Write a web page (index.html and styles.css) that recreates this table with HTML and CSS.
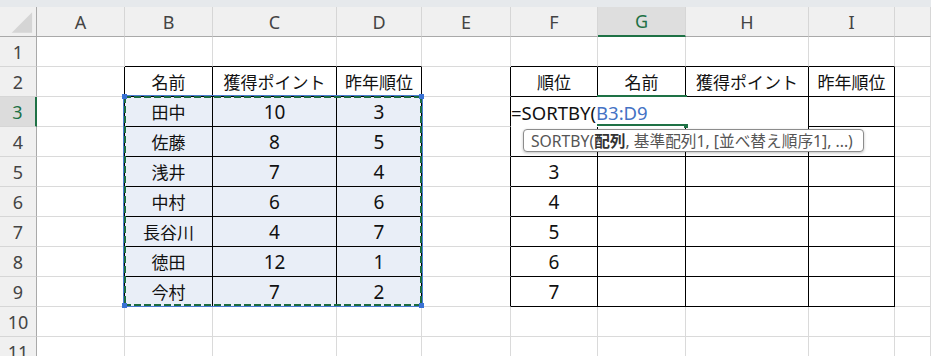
FILE: index.html
```html
<!DOCTYPE html>
<html lang="ja">
<head>
<meta charset="utf-8">
<title>Sheet</title>
<link rel="stylesheet" href="styles.css">
</head>
<body>
<div class="app">
  <div class="strip"></div>
  <div class="sheet">
    <!-- header row -->
    <div class="c corner"><svg width="37" height="30" viewBox="0 0 37 30"><polygon points="12,26 33,26 33,5" fill="#d5d5d5"/></svg></div>
    <div class="c ch">A</div><div class="c ch">B</div><div class="c ch">C</div><div class="c ch">D</div><div class="c ch">E</div><div class="c ch">F</div><div class="c ch ch-act">G</div><div class="c ch">H</div><div class="c ch">I</div><div class="c ch"></div>
    <!-- row 1 -->
    <div class="c rh">1</div><div class="c"></div><div class="c bb"></div><div class="c bb"></div><div class="c bb"></div><div class="c"></div><div class="c bb"></div><div class="c bb"></div><div class="c bb"></div><div class="c bb"></div><div class="c"></div>
    <!-- row 2 -->
    <div class="c rh">2</div><div class="c br"></div><div class="c t">名前</div><div class="c t">獲得ポイント</div><div class="c t">昨年順位</div><div class="c br"></div><div class="c t">順位</div><div class="c t">名前</div><div class="c t">獲得ポイント</div><div class="c t">昨年順位</div><div class="c"></div>
    <!-- row 3 -->
    <div class="c rh rh-act">3</div><div class="c br"></div><div class="c t s">田中</div><div class="c t s n">10</div><div class="c t s n">3</div><div class="c br"></div><div class="c t"></div><div class="c t"></div><div class="c t"></div><div class="c t"></div><div class="c"></div>
    <!-- row 4 -->
    <div class="c rh">4</div><div class="c br"></div><div class="c t s">佐藤</div><div class="c t s n">8</div><div class="c t s n">5</div><div class="c br"></div><div class="c t"></div><div class="c t"></div><div class="c t"></div><div class="c t"></div><div class="c"></div>
    <!-- row 5 -->
    <div class="c rh">5</div><div class="c br"></div><div class="c t s">浅井</div><div class="c t s n">7</div><div class="c t s n">4</div><div class="c br"></div><div class="c t n">3</div><div class="c t"></div><div class="c t"></div><div class="c t"></div><div class="c"></div>
    <!-- row 6 -->
    <div class="c rh">6</div><div class="c br"></div><div class="c t s">中村</div><div class="c t s n">6</div><div class="c t s n">6</div><div class="c br"></div><div class="c t n">4</div><div class="c t"></div><div class="c t"></div><div class="c t"></div><div class="c"></div>
    <!-- row 7 -->
    <div class="c rh">7</div><div class="c br"></div><div class="c t s">長谷川</div><div class="c t s n">4</div><div class="c t s n">7</div><div class="c br"></div><div class="c t n">5</div><div class="c t"></div><div class="c t"></div><div class="c t"></div><div class="c"></div>
    <!-- row 8 -->
    <div class="c rh">8</div><div class="c br"></div><div class="c t s">徳田</div><div class="c t s n">12</div><div class="c t s n">1</div><div class="c br"></div><div class="c t n">6</div><div class="c t"></div><div class="c t"></div><div class="c t"></div><div class="c"></div>
    <!-- row 9 -->
    <div class="c rh">9</div><div class="c br"></div><div class="c t s">今村</div><div class="c t s n">7</div><div class="c t s n">2</div><div class="c br"></div><div class="c t n">7</div><div class="c t"></div><div class="c t"></div><div class="c t"></div><div class="c"></div>
    <!-- row 10 -->
    <div class="c rh">10</div><div class="c"></div><div class="c"></div><div class="c"></div><div class="c"></div><div class="c"></div><div class="c"></div><div class="c"></div><div class="c"></div><div class="c"></div><div class="c"></div>
    <!-- row 11 -->
    <div class="c rh rh-last">11</div><div class="c"></div><div class="c"></div><div class="c"></div><div class="c"></div><div class="c"></div><div class="c"></div><div class="c"></div><div class="c"></div><div class="c"></div><div class="c"></div>

    <!-- overlays -->
    <div class="sel"></div>
    <div class="handle h-tl"></div>
    <div class="handle h-tr"></div>
    <div class="handle h-bl"></div>
    <div class="handle h-br"></div>
    <div class="edit">=SORTBY(<span class="ref">B3:D9</span></div>
    <div class="act act-top"></div>
    <div class="act act-bot"></div>
    <div class="act-sq"></div>
    <div class="tip">SORTBY(<b>配列</b>, 基準配列1, [並べ替え順序1], ...)</div>
  </div>
</div>
</body>
</html>
```

FILE: styles.css
```css
* { box-sizing: border-box; }
html, body { margin: 0; padding: 0; background: #fff; }
body {
  width: 931px;
  height: 356px;
  overflow: hidden;
  font-family: "Noto Sans CJK JP", "Noto Sans", sans-serif;
}
.app { width: 931px; }
.strip { height: 7px; background: #e6e9ec; }
.sheet {
  position: relative;
  display: grid;
  grid-template-columns: 37px 88px 88px 124px 85px 89px 87px 88px 123px 86px 1fr;
  grid-auto-rows: 30px;
}
.c {
  border-right: 1px solid #dadada;
  border-bottom: 1px solid #dadada;
  display: flex;
  align-items: center;
  justify-content: center;
  font-size: 17px;
  color: #111;
  white-space: nowrap;
  overflow: hidden;
}
.n {
  font-family: "Noto Sans", sans-serif;
  font-size: 19px;
}
.ch {
  background: #f0f0f0;
  border-right-color: #d6d6d6;
  border-bottom-color: #a9a9a9;
  color: #444;
  font-size: 18px;
  font-family: "Noto Sans", sans-serif;
}
.ch-act {
  background: #dedede;
  color: #1e7145;
  border-bottom: 2px solid #1e7145;
}
.corner {
  background: #f0f0f0;
  border-right-color: #a9a9a9;
  border-bottom-color: #a9a9a9;
  align-items: stretch;
  justify-content: stretch;
}
.rh {
  background: #f0f0f0;
  border-right-color: #a9a9a9;
  border-bottom-color: #d6d6d6;
  color: #444;
  font-size: 18px;
  font-family: "Noto Sans", sans-serif;
}
.rh-last { align-items: flex-start; padding-top: 3px; }
.rh-act {
  background: #dcdcdc;
  color: #1e7145;
  border-right: 2px solid #1e7145;
}
.bb { border-bottom-color: #000; }
.br { border-right-color: #000; }
.t { border-right-color: #000; border-bottom-color: #000; }
.s { background: #e9eef7; }

.sel {
  position: absolute;
  left: 123px;
  top: 88px;
  width: 300px;
  height: 212px;
  border: 1px solid #4a7bd0;
  background:
    repeating-linear-gradient(90deg, #1b6b40 0 7px, transparent 7px 10px) left top / 100% 2px no-repeat,
    repeating-linear-gradient(90deg, #1b6b40 0 7px, transparent 7px 10px) left bottom / 100% 2px no-repeat,
    repeating-linear-gradient(180deg, #1b6b40 0 7px, transparent 7px 10px) left top / 2px 100% no-repeat,
    repeating-linear-gradient(180deg, #1b6b40 0 7px, transparent 7px 10px) right top / 2px 100% no-repeat;
}
.handle {
  position: absolute;
  width: 5px;
  height: 5px;
  background: #3a72d4;
}
.h-tl { left: 122px; top: 87px; }
.h-tr { left: 419px; top: 87px; }
.h-bl { left: 122px; top: 296px; }
.h-br { left: 419px; top: 296px; }

.edit {
  position: absolute;
  left: 511px;
  top: 90px;
  width: 297px;
  height: 30px;
  background: #fff;
  display: flex;
  align-items: center;
  font-family: "Noto Sans", sans-serif;
  font-size: 18.5px;
  color: #111;
  white-space: nowrap;
}
.ref { color: #4472c4; }
.act {
  position: absolute;
  left: 597px;
  width: 90px;
  height: 2px;
  background: #1e7145;
}
.act-top { top: 88px; }
.act-bot { top: 117px; }
.act-sq {
  position: absolute;
  left: 684px;
  top: 117px;
  width: 4px;
  height: 4px;
  background: #1e7145;
}
.tip {
  position: absolute;
  left: 523px;
  top: 122px;
  width: 341px;
  height: 23px;
  border: 1px solid #8c8c8c;
  border-radius: 4px;
  background: #fff;
  box-shadow: 0 1px 3px rgba(0,0,0,0.25);
  display: flex;
  align-items: center;
  padding-left: 7px;
  font-family: "Noto Sans", "Noto Sans CJK JP", sans-serif;
  font-size: 15.7px;
  color: #555;
  white-space: nowrap;
}
.tip b { color: #333; font-weight: 700; }
```
